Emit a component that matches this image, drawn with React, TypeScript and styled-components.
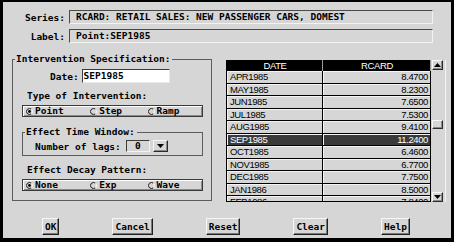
import styled, { createGlobalStyle } from "styled-components";

const MONO = `"DejaVu Sans Mono", "Liberation Mono", monospace`;
const SANS = `"Liberation Sans", Arial, sans-serif`;
const FACE = "#d6d6d6";

const GlobalStyle = createGlobalStyle`
  html, body { margin:0; padding:0; background:#000; }
  body { width:454px; height:242px; overflow:hidden; }
`;

const Window = styled.div`
  box-sizing:border-box;
  width:454px;
  height:242px;
  border-style:solid;
  border-color:#000;
  border-width:2px 3px 4px 3px;
  background:${FACE};
  font-family:${MONO};
  font-weight:bold;
  font-size:9.5px;
  color:#000;
  display:flex;
  flex-direction:column;
  padding-top:8px;
`;

const InfoRow = styled.div<{ $top?: number }>`
  display:flex;
  align-items:center;
  gap:4px;
  height:14px;
  margin-top:${(p) => p.$top ?? 0}px;
`;

const InfoLabel = styled.div`
  width:62px;
  text-align:right;
  white-space:nowrap;
`;

const InfoField = styled.div`
  box-sizing:border-box;
  width:364px;
  height:14px;
  border-style:solid;
  border-width:1px;
  border-color:#4a4a4a #f2f2f2 #f2f2f2 #4a4a4a;
  padding-left:6px;
  line-height:12px;
  white-space:nowrap;
  overflow:hidden;
`;

const Main = styled.div`
  display:flex;
  align-items:flex-start;
  margin-top:11px;
  padding-left:9px;
`;

const Group = styled.fieldset<{ $w: number; $h: number; $left?: number; $top?: number }>`
  box-sizing:border-box;
  width:${(p) => p.$w}px;
  height:${(p) => p.$h}px;
  margin:${(p) => p.$top ?? 0}px 0 0 ${(p) => p.$left ?? 0}px;
  padding:0;
  border:1px solid #5c5c5c;
  min-inline-size:0;
`;

const Legend = styled.legend`
  padding:0 2px 0 1px;
  margin-left:2px;
  line-height:10px;
  height:10px;
  white-space:nowrap;
`;

const DateRow = styled.div`
  display:flex;
  align-items:center;
  gap:3px;
  margin-top:5px;
  padding-left:37px;
`;

const TextInput = styled.div`
  box-sizing:border-box;
  width:88px;
  height:14px;
  background:#fff;
  border-style:solid;
  border-width:1px;
  border-color:#3c3c3c #e8e8e8 #e8e8e8 #3c3c3c;
  padding-left:1px;
  line-height:12px;
`;

const SectionLabel = styled.div<{ $top: number }>`
  margin:${(p) => p.$top}px 0 0 14px;
  line-height:10px;
  height:10px;
  white-space:nowrap;
`;

const RadioBox = styled.div`
  box-sizing:border-box;
  display:flex;
  width:181px;
  height:12px;
  margin:4px 0 0 9px;
  border:1px solid #3a3a3a;
  box-shadow:inset 1px 1px 0 #ffffff, inset -1px -1px 0 #8a8a8a;
  font-weight:bold;
`;

const RadioItem = styled.div<{ $w: number }>`
  display:flex;
  align-items:center;
  gap:2px;
  width:${(p) => p.$w}px;
  padding-left:3px;
  line-height:10px;
`;

const Radio = ({ on }: { on?: boolean }) => (
  <svg width="7" height="7" viewBox="0 0 7 7">
    <path d="M5.5 1.3 A3 3 0 1 0 5.5 5.7" fill="none" stroke="#1a1a1a" strokeWidth="1" />
    <path d="M5.5 1.3 A3 3 0 0 1 5.5 5.7" fill="none" stroke="#ffffff" strokeWidth="1" />
    {on && <circle cx="3.5" cy="3.5" r="1.4" fill="#000" />}
  </svg>
);

const LagsRow = styled.div`
  display:flex;
  align-items:center;
  margin-top:3px;
  padding-left:12px;
`;

const LagsField = styled.div`
  box-sizing:border-box;
  width:24px;
  height:12px;
  margin-left:5px;
  border-style:solid;
  border-width:1px;
  border-color:#3c3c3c #f2f2f2 #f2f2f2 #3c3c3c;
  text-align:center;
  line-height:10px;
`;

const RaisedBtn = styled.div<{ $w: number; $h: number }>`
  box-sizing:border-box;
  width:${(p) => p.$w}px;
  height:${(p) => p.$h}px;
  display:flex;
  align-items:center;
  justify-content:center;
  border-style:solid;
  border-width:1px;
  border-color:#f6f6f6 #2c2c2c #2c2c2c #f6f6f6;
  box-shadow:inset -1px -1px 0 #8a8a8a;
  background:${FACE};
`;

const DropBtn = styled(RaisedBtn)`
  margin-left:3px;
`;

const Tri = ({ up }: { up?: boolean }) => (
  <svg width="7" height="4" viewBox="0 0 7 4">
    <path d={up ? "M0 4 L3.5 0 L7 4 Z" : "M0 0 L7 0 L3.5 4 Z"} fill="#000" />
  </svg>
);

const TablePanel = styled.div`
  display:flex;
  margin:6px 0 0 14px;
  height:142px;
`;

const Table = styled.div`
  box-sizing:border-box;
  width:205px;
  height:142px;
  overflow:hidden;
  border-left:1px solid #000;
  border-bottom:1px solid #000;
  font-family:${SANS};
  font-weight:normal;
  font-size:9.5px;
  letter-spacing:-0.4px;
`;

const Row = styled.div<{ $head?: boolean; $sel?: boolean }>`
  display:grid;
  grid-template-columns:96px 108px;
  height:${(p) => (p.$head ? 11 : 12.5)}px;
  background:${(p) => (p.$head ? "#000" : p.$sel ? "#3a3a3a" : FACE)};
  color:${(p) => (p.$head || p.$sel ? "#fff" : "#000")};
`;

const Cell = styled.div<{ $right?: boolean; $head?: boolean }>`
  box-sizing:border-box;
  height:100%;
  padding:0 2px 0 3px;
  line-height:11px;
  white-space:nowrap;
  text-align:${(p) => (p.$head ? "center" : p.$right ? "right" : "left")};
  border-right:1px solid ${(p) => (p.$head ? "#9a9a9a" : "#000")};
  border-bottom:1px solid #000;
  box-shadow:${(p) => (p.$head ? "none" : "inset 1px 1px 0 #f4f4f4")};
`;

const ScrollBar = styled.div`
  box-sizing:border-box;
  width:15px;
  height:142px;
  display:flex;
  flex-direction:column;
  padding-left:1px;
  border-right:1px solid #f4f4f4;
`;

const Track = styled.div`
  flex:1;
`;

const Footer = styled.div`
  display:flex;
  gap:53px;
  margin-top:16px;
  padding-left:39px;
`;

const Button = styled.div`
  box-sizing:border-box;
  height:17px;
  padding:0 2px;
  display:flex;
  align-items:center;
  border-style:solid;
  border-width:1px;
  border-color:#f6f6f6 #202020 #202020 #f6f6f6;
  box-shadow:inset -1px -1px 0 #7a7a7a;
  white-space:nowrap;
`;

const rows: [string, string][] = [
  ["APR1985", "8.4700"],
  ["MAY1985", "8.2300"],
  ["JUN1985", "7.6500"],
  ["JUL1985", "7.5300"],
  ["AUG1985", "9.4100"],
  ["SEP1985", "11.2400"],
  ["OCT1985", "6.4600"],
  ["NOV1985", "6.7700"],
  ["DEC1985", "7.7500"],
  ["JAN1986", "8.5000"],
  ["FEB1986", "7.8400"],
];

const selected = "SEP1985";
const thumbTop = 50;

export default function App() {
  return (
    <>
      <GlobalStyle />
      <Window>
        <InfoRow>
          <InfoLabel>Series:</InfoLabel>
          <InfoField>RCARD: RETAIL SALES: NEW PASSENGER CARS, DOMEST</InfoField>
        </InfoRow>
        <InfoRow $top={5}>
          <InfoLabel>Label:</InfoLabel>
          <InfoField>Point:SEP1985</InfoField>
        </InfoRow>

        <Main>
          <Group $w={200} $h={147}>
            <Legend>Intervention Specification:</Legend>
            <DateRow>
              <span>Date:</span>
              <TextInput>SEP1985</TextInput>
            </DateRow>
            <SectionLabel $top={8}>Type of Intervention:</SectionLabel>
            <RadioBox>
              <RadioItem $w={63}><Radio on />Point</RadioItem>
              <RadioItem $w={56}><Radio />Step</RadioItem>
              <RadioItem $w={56}><Radio />Ramp</RadioItem>
            </RadioBox>
            <Group $w={181} $h={29} $left={9} $top={10}>
              <Legend>Effect Time Window:</Legend>
              <LagsRow>
                <span>Number of lags:</span>
                <LagsField>0</LagsField>
                <DropBtn $w={15} $h={12}><Tri /></DropBtn>
              </LagsRow>
            </Group>
            <SectionLabel $top={9}>Effect Decay Pattern:</SectionLabel>
            <RadioBox>
              <RadioItem $w={63}><Radio on />None</RadioItem>
              <RadioItem $w={56}><Radio />Exp</RadioItem>
              <RadioItem $w={56}><Radio />Wave</RadioItem>
            </RadioBox>
          </Group>

          <TablePanel>
            <Table>
              <Row $head>
                <Cell $head>DATE</Cell>
                <Cell $head>RCARD</Cell>
              </Row>
              {rows.map(([d, v]) => (
                <Row key={d} $sel={d === selected}>
                  <Cell>{d}</Cell>
                  <Cell $right>{v}</Cell>
                </Row>
              ))}
            </Table>
            <ScrollBar>
              <RaisedBtn $w={11} $h={10}><Tri up /></RaisedBtn>
              <Track>
                <RaisedBtn $w={11} $h={9} style={{ marginTop: thumbTop }} />
              </Track>
              <RaisedBtn $w={11} $h={10}><Tri /></RaisedBtn>
            </ScrollBar>
          </TablePanel>
        </Main>

        <Footer>
          <Button>OK</Button>
          <Button>Cancel</Button>
          <Button>Reset</Button>
          <Button>Clear</Button>
          <Button>Help</Button>
        </Footer>
      </Window>
    </>
  );
}
